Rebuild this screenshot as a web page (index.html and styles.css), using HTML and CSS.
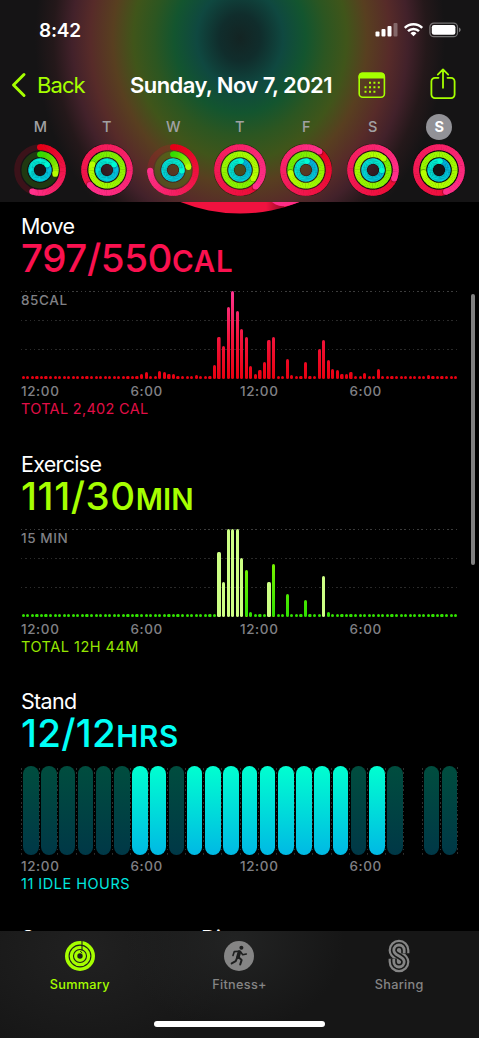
FILE: index.html
```
<!DOCTYPE html>
<html lang="en">
<head>
    <meta charset="UTF-8">
    <meta name="viewport" content="width=device-width, initial-scale=1.0">
    <title>Activity</title>
    <link rel="stylesheet" href="styles.css">
</head>
<body>
    <div class="phone">
        <!-- Header -->
        <header class="header">
            <div class="status-bar">
                <span class="time">8:42</span>
                <svg class="status-icons" width="86" height="16" viewBox="0 0 86 16">
                    <g fill="#fff">
                        <rect x="0.5" y="9.5" width="4" height="5" rx="1"/>
                        <rect x="6.5" y="7" width="4" height="7.5" rx="1"/>
                        <rect x="12.5" y="4" width="4" height="10.5" rx="1"/>
                        <rect x="18.5" y="1" width="4" height="13.5" rx="1" opacity="0.3"/>
                        <path d="M38.5 14.3l-3-3a4.3 4.3 0 0 1 6 0z"/>
                    </g>
                    <g fill="none" stroke="#fff" stroke-width="2.5">
                        <path d="M33 9.2a7.8 7.8 0 0 1 11 0"/>
                        <path d="M29.8 5.9a12.4 12.4 0 0 1 17.4 0"/>
                    </g>
                    <rect x="54.9" y="1.1" width="27.6" height="13.6" rx="4" fill="none" stroke="#fff" stroke-opacity="0.4" stroke-width="1.2"/>
                    <rect x="56.8" y="3" width="23.6" height="9.8" rx="2.2" fill="#fff"/>
                    <path d="M84 5.5c2.2.8 2.2 3.8 0 4.6z" fill="#fff" opacity="0.45"/>
                </svg>
            </div>

            <nav class="nav">
                <a class="back" href="#">
                    <svg width="16" height="26" viewBox="0 0 16 26"><path d="M13 2.5L2.5 13 13 23.5" fill="none" stroke="currentColor" stroke-width="3" stroke-linecap="round" stroke-linejoin="round"/></svg>
                    <span>Back</span>
                </a>
                <h1>Sunday, Nov 7, 2021</h1>
                <svg class="calendar" width="28" height="27" viewBox="0 0 28 27">
                    <rect x="1.2" y="1.2" width="25.2" height="24" rx="3.5" fill="none" stroke="currentColor" stroke-width="1.6"/>
                    <path d="M.5 6.6V4.5a4 4 0 0 1 4-4H23a4 4 0 0 1 4 4v2.1z" fill="currentColor"/>
                    <path d="M11 10.7h2m2.4 0h2m2.4 0h2M6.5 15.2h2m2.5 0h2m2.4 0h2m2.4 0h2M6.5 19.7h2m2.5 0h2m2.4 0h2" stroke="currentColor" stroke-width="2"/>
                </svg>
                <svg class="share" width="26" height="32" viewBox="0 0 26 32">
                    <path d="M8.5 9.8H5a3.6 3.6 0 0 0-3.6 3.6v13.2A3.6 3.6 0 0 0 5 30.2h16a3.6 3.6 0 0 0 3.6-3.6V13.4A3.6 3.6 0 0 0 21 9.8h-3.5M13 19.8V1.8M7.8 6.6L13 1.4l5.2 5.2" fill="none" stroke="currentColor" stroke-width="1.8" stroke-linecap="round" stroke-linejoin="round"/>
                </svg>
            </nav>

            <div class="week" id="week"></div>
        </header>

        <!-- Day details -->
        <main class="content">
            <svg class="big-ring" width="479" height="16" viewBox="0 202 479 16">
                <defs>
                    <linearGradient id="capShade">
                        <stop offset="0" stop-color="#000" stop-opacity="0"/>
                        <stop offset="1" stop-color="#000" stop-opacity="0.4"/>
                    </linearGradient>
                    <clipPath id="ringClip"><circle cx="240" cy="53.5" r="160"/></clipPath>
                </defs>
                <circle cx="240" cy="53.5" r="160" fill="#f0123f"/>
                <rect x="266" y="200" width="18" height="14" fill="url(#capShade)" clip-path="url(#ringClip)"/>
                <path d="M284 187.6A141 141 0 0 0 350 141" fill="none" stroke="#ff2d87" stroke-width="37.5" stroke-linecap="round"/>
            </svg>

            <section class="metric move">
                <h2>Move</h2>
                <p class="value">797/550<small>CAL</small></p>
                <div class="chart">
                    <span class="scale">85CAL</span>
                    <div class="bars" id="moveBars"></div>
                </div>
                <div class="axis"><span>12:00</span><span>6:00</span><span>12:00</span><span>6:00</span></div>
                <p class="total">TOTAL 2,402 CAL</p>
            </section>

            <section class="metric exercise">
                <h2>Exercise</h2>
                <p class="value">111/30<small>MIN</small></p>
                <div class="chart">
                    <span class="scale">15 MIN</span>
                    <div class="bars" id="exerciseBars"></div>
                </div>
                <div class="axis"><span>12:00</span><span>6:00</span><span>12:00</span><span>6:00</span></div>
                <p class="total">TOTAL 12H 44M</p>
            </section>

            <section class="metric stand">
                <h2>Stand</h2>
                <p class="value">12/12<small>HRS</small></p>
                <div class="hours" id="standHours"></div>
                <div class="axis"><span>12:00</span><span>6:00</span><span>12:00</span><span>6:00</span></div>
                <p class="total">11 IDLE HOURS</p>
            </section>

            <section class="more">
                <h2>Steps</h2>
                <h2>Distance</h2>
            </section>
        </main>

        <div class="scrollbar"></div>

        <!-- Tab bar -->
        <footer class="tab-bar">
            <div class="tabs">
                <a class="tab active" href="#">
                    <svg width="34" height="34" viewBox="0 0 34 34">
                        <circle cx="17" cy="17" r="15" fill="currentColor"/>
                        <g fill="none" stroke="#1c1e1b" stroke-width="1.1">
                            <circle cx="17" cy="17" r="10.9"/>
                            <circle cx="17" cy="17" r="6.5"/>
                            <path d="M19 2v9.5"/>
                        </g>
                        <circle cx="17" cy="17" r="2.7" fill="#1c1e1b"/>
                        <path d="M17.2 12.2l2 1.8" stroke="#1c1e1b" stroke-width="1"/>
                    </svg>
                    <span>Summary</span>
                </a>
                <a class="tab" href="#">
                    <svg width="34" height="34" viewBox="0 0 34 34">
                        <circle cx="17" cy="17" r="15" fill="currentColor"/>
                        <circle cx="19.4" cy="8.8" r="2" fill="#1e1f1f"/>
                        <g fill="none" stroke="#1e1f1f" stroke-linecap="round" stroke-linejoin="round">
                            <path d="M17.4 13l-1.5 5.2" stroke-width="3.6"/>
                            <path d="M17 12.2l-4.7.4-1.3 3.9M18.5 12.8l2.2 3 3.6-.8" stroke-width="1.6"/>
                            <path d="M16.6 18.3l3 2.8-1.4 4.4M15.2 18.6l-1.5 3.6-4 2.2" stroke-width="2"/>
                        </g>
                    </svg>
                    <span>Fitness+</span>
                </a>
                <a class="tab" href="#">
                    <svg width="24" height="34" viewBox="0 0 24 34">
                        <g fill="none">
                            <path d="M17.2 14.2V11.2a5.2 5.2 0 0 0-10.4 0c0 6 10.4 5.6 10.4 11.6a5.2 5.2 0 0 1-10.4 0V19.8" stroke="currentColor" stroke-width="10.4"/>
                            <path d="M17.2 14.4V11.2a5.2 5.2 0 0 0-10.4 0c0 6 10.4 5.6 10.4 11.6a5.2 5.2 0 0 1-10.4 0V19.6" stroke="#171817" stroke-width="6"/>
                            <path d="M17.2 14.2V11.2a5.2 5.2 0 0 0-10.4 0c0 6 10.4 5.6 10.4 11.6a5.2 5.2 0 0 1-10.4 0V19.8" stroke="currentColor" stroke-width="2.8"/>
                        </g>
                    </svg>
                    <span>Sharing</span>
                </a>
            </div>
            <div class="home-indicator"></div>
        </footer>
    </div>

    <script>
        // Ring values are laps: 1 is a closed ring
        const week = [
            { day: 'M', move: 0.555, exercise: 0.29, stand: 1.15 },
            { day: 'T', move: 1.635, exercise: 1.81, stand: 1.15 },
            { day: 'W', move: 0.745, exercise: 0.22, stand: 1.27 },
            { day: 'T', move: 1.38, exercise: 2.34, stand: 1.02 },
            { day: 'F', move: 1.10, exercise: 1.72, stand: 1.02 },
            { day: 'S', move: 1.31, exercise: 2.12, stand: 1.26 },
            { day: 'S', move: 1.45, exercise: 3.72, stand: 1.02, selected: true }
        ];

        const rings = [
            { key: 'move', r: 22.8, width: 6, from: [229, 0, 22], to: [255, 48, 140] },
            { key: 'exercise', r: 15.7, width: 5.7, from: [50, 220, 0], to: [182, 255, 0] },
            { key: 'stand', r: 8.9, width: 5.5, from: [0, 176, 228], to: [0, 250, 210] }
        ];

        function mix(a, b, t) {
            return `rgb(${a.map((v, i) => Math.round(v + (b[i] - v) * t)).join(',')})`;
        }

        function point(r, lap) {
            const a = lap * Math.PI * 2;
            return [(26 + r * Math.sin(a)).toFixed(2), (26 - r * Math.cos(a)).toFixed(2)];
        }

        // Each ring is made of short arcs so the colour can follow the curve
        function drawRing(ring, value) {
            const start = Math.max(0, value - 1);
            const steps = 60;
            let svg = `<circle cx="26" cy="26" r="${ring.r}" fill="none" stroke="${mix(ring.from, ring.to, 0.2)}" stroke-opacity="0.18" stroke-width="${ring.width}"/>`;
            if (value <= 1) {
                const [x, y] = point(ring.r, 0);
                svg += `<circle cx="${x}" cy="${y}" r="${ring.width / 2}" fill="${mix(ring.from, ring.to, 0)}"/>`;
            } else {
                svg += `<circle cx="26" cy="26" r="${ring.r}" fill="none" stroke="#000" stroke-opacity="0.35" stroke-width="${ring.width + 1.4}"/>`;
            }
            for (let i = 0; i < steps; i++) {
                const a = start + (value - start) * i / steps;
                const b = start + (value - start) * (i + 1) / steps + 0.003;
                const [x1, y1] = point(ring.r, a);
                const [x2, y2] = point(ring.r, b);
                svg += `<path d="M${x1} ${y1}A${ring.r} ${ring.r} 0 0 1 ${x2} ${y2}" fill="none" stroke="${mix(ring.from, ring.to, a / value)}" stroke-width="${ring.width}"/>`;
            }
            const [x, y] = point(ring.r, value);
            if (value > 1) {
                const [sx, sy] = point(ring.r, value + 0.008);
                svg += `<circle cx="${sx}" cy="${sy}" r="${ring.width / 2}" fill="#000" opacity="0.25"/>`;
            }
            svg += `<circle cx="${x}" cy="${y}" r="${ring.width / 2}" fill="${mix(ring.from, ring.to, 1)}"/>`;
            return svg;
        }

        document.getElementById('week').innerHTML = week.map(d => `
            <div class="day${d.selected ? ' selected' : ''}">
                <span class="day-name">${d.day}</span>
                <svg width="52" height="52" viewBox="0 0 52 52">${rings.map(r => drawRing(r, d[r.key])).join('')}</svg>
            </div>`).join('');

        // Quarter-hour bars, heights in px. Slots not listed are empty.
        const move = {
            26: 5.3, 27: 7, 30: 8, 31: 7.5, 32: 5.3, 33: 5, 38: 4, 42: 14, 43: 42.5, 44: 33.5,
            45: 72.5, 46: 88, 47: 68, 48: 50, 49: 42.5, 50: 13.5, 51: 5, 52: 9, 53: 17, 54: 39.5,
            55: 42.5, 58: 20.5, 59: 4, 62: 17, 65: 30.5, 66: 39, 67: 19.5, 68: 10.5, 69: 9.5,
            70: 5.5, 71: 5.5, 72: 7, 75: 6, 77: 3.5, 78: 10, 89: 3.7
        };
        const exercise = {
            43: 64.5, 44: 35, 45: 88, 46: 88, 47: 88, 48: 58.5, 49: 46.5, 50: 5,
            54: 34.5, 55: 52.5, 58: 23, 62: 17, 66: 40.5, 67: 5
        };
        const workout = [43, 44, 45, 46, 47, 48, 54, 66];

        function renderBars(id, data, highlighted) {
            let html = '';
            for (let i = 0; i < 96; i++) {
                const cls = highlighted.includes(i) ? 'bar workout' : 'bar';
                html += `<i class="${cls}" style="height: ${data[i] || 3}px"></i>`;
            }
            document.getElementById(id).innerHTML = html;
        }

        renderBars('moveBars', move, []);
        renderBars('exerciseBars', exercise, workout);

        // s = stood, i = idle, - = no data
        const hourClass = { s: 'stood', i: 'idle', '-': 'none' };
        document.getElementById('standHours').innerHTML = [...'iiiiiississsssssssisi-ii']
            .map(h => `<div class="hour"><i class="${hourClass[h]}"></i></div>`).join('');
    </script>
</body>
</html>
```
FILE: styles.css
```
* {
    margin: 0;
    padding: 0;
    box-sizing: border-box;
    font-family: Inter, 'Liberation Sans', sans-serif;
}

body {
    background: #fff;
}

.phone {
    position: relative;
    display: flex;
    flex-direction: column;
    width: 479px;
    height: 1038px;
    background: #000;
    color: #fff;
    overflow: hidden;
}

a {
    color: inherit;
    text-decoration: none;
}

/* Header */
.header {
    flex: none;
    height: 202px;
    background: radial-gradient(ellipse 205px 235px at 240px 38px,
        #132423 0%, #102d2c 10%, #0f4840 21%, #13552f 32%, #2c5621 42%,
        #40551a 52%, #583f20 62%, #572b29 73%, #42212a 82%, #24181a 91%, #151415 100%);
}

.status-bar {
    display: flex;
    justify-content: space-between;
    align-items: center;
    height: 60px;
    padding: 0 18px 0 39px;
}

.time {
    font-size: 19px;
    font-weight: 600;
    letter-spacing: -0.2px;
}

.nav {
    display: flex;
    align-items: center;
    height: 50px;
    padding: 0 23px 0 11px;
    color: #a6ff00;
}

.back {
    display: flex;
    align-items: center;
    gap: 10px;
    width: 119px;
    font-size: 22px;
    letter-spacing: -0.9px;
}

.nav h1 {
    width: 228px;
    color: #fff;
    font-size: 22px;
    font-weight: 600;
    letter-spacing: -0.57px;
    white-space: nowrap;
}

.share {
    margin-left: auto;
    position: relative;
    top: -1px;
}

.week {
    display: grid;
    grid-template-columns: repeat(7, 66.5px);
    padding: 4px 0 0 7px;
}

.day {
    display: flex;
    flex-direction: column;
    align-items: center;
    gap: 4px;
}

.day-name {
    width: 26px;
    height: 26px;
    border-radius: 50%;
    color: #a1a1a3;
    font-size: 14.5px;
    font-weight: 500;
    line-height: 26px;
    text-align: center;
}

.selected .day-name {
    background: #929297;
    color: #fff;
    font-weight: 700;
}

/* Metrics */
.content {
    flex: none;
    display: flow-root;
    height: 730px;
}

.big-ring {
    display: block;
    margin-bottom: -5px;
}

.metric {
    height: 237.6px;
    padding-left: 21px;
}

h2 {
    font-size: 21.5px;
    font-weight: 400;
    line-height: 26px;
    letter-spacing: -0.7px;
}

.value {
    font-size: 38.5px;
    font-weight: 500;
    line-height: 39px;
    letter-spacing: -0.4px;
}

.value small {
    font-size: 29.5px;
    font-weight: 600;
    letter-spacing: 0.8px;
}

.move .value,
.move .total {
    color: #fa114f;
}

.exercise .value,
.exercise .total {
    color: #a6ff00;
}

.exercise .value {
    letter-spacing: 0.6px;
}

.exercise small {
    letter-spacing: 0;
}

.stand .value,
.stand .total {
    color: #00fff6;
}

.stand .value {
    letter-spacing: 0.3px;
}

.chart {
    position: relative;
    width: 437px;
    height: 88px;
    margin-top: 10px;
    background:
        repeating-linear-gradient(90deg, #3c3c3c 0 1.5px, transparent 1.5px 4.26px) 0 0 / 100% 1px no-repeat,
        repeating-linear-gradient(90deg, #2a2a2a 0 1.5px, transparent 1.5px 4.26px) 0 29px / 100% 1px no-repeat,
        repeating-linear-gradient(90deg, #2a2a2a 0 1.5px, transparent 1.5px 4.26px) 0 58px / 100% 1px no-repeat;
}

.scale {
    position: absolute;
    top: 1px;
    left: 0;
    color: #808085;
    font-size: 13.5px;
    font-weight: 500;
    line-height: 17px;
    letter-spacing: 0.6px;
}

.bars {
    display: grid;
    grid-template-columns: repeat(96, 1fr);
    align-items: end;
    justify-items: center;
    height: 100%;
}

/* Gradient is tied to the chart height, not the bar */
.bar {
    width: 3.2px;
    border-radius: 1.5px;
    background: linear-gradient(0deg, #e8000f, #f2163f 50%, #ff3592) bottom / 100% 88px;
}

.exercise .bar {
    background-image: linear-gradient(0deg, #2fe000, #a6ff00);
}

.exercise .workout {
    background: #cdff85;
}

.hours {
    display: grid;
    grid-template-columns: repeat(24, 1fr);
    width: 437px;
    height: 88px;
    margin-top: 10px;
    background: repeating-linear-gradient(0deg, #303030 0 1.5px, transparent 1.5px 4.26px) right / 1px 100% no-repeat;
}

.hour {
    padding: 0 0 0 2px;
    background: repeating-linear-gradient(0deg, #303030 0 1.5px, transparent 1.5px 4.26px) left / 1px 100% no-repeat;
}

.hour i {
    display: block;
    width: 15.6px;
    height: 88.5px;
    border-radius: 8px;
}

.stood {
    background: linear-gradient(#00ffd0, #00b9e4);
}

.idle {
    background: linear-gradient(#004d3e, #003847);
}

.axis {
    display: grid;
    grid-template-columns: repeat(4, 109.5px);
    margin-top: 3px;
    color: #808085;
    font-size: 13.5px;
    font-weight: 500;
    line-height: 18px;
    letter-spacing: 0.6px;
}

.total {
    font-size: 14.5px;
    line-height: 17px;
    letter-spacing: 0.5px;
    opacity: 0.9;
}

.move .total {
    letter-spacing: 0.3px;
}

.more {
    display: grid;
    grid-template-columns: 180px 1fr;
    margin-top: -0.5px;
    padding-left: 21px;
}

.scrollbar {
    position: absolute;
    top: 294px;
    right: 4px;
    width: 4px;
    height: 271px;
    border-radius: 2px;
    background: #808080;
}

/* Tab bar */
.tab-bar {
    position: absolute;
    left: 0;
    bottom: 0;
    width: 479px;
    height: 107px;
    background:
        radial-gradient(ellipse 110px 90px at 235px 10px, #222323, transparent),
        radial-gradient(ellipse 150px 110px at 85px 20px, #212121, transparent),
        #161616;
}

.tabs {
    display: grid;
    grid-template-columns: repeat(3, 1fr);
    height: 89px;
    padding-top: 8px;
}

.tab {
    display: flex;
    flex-direction: column;
    align-items: center;
    gap: 3px;
    color: #858585;
    font-size: 12.7px;
    font-weight: 500;
    line-height: 18px;
    letter-spacing: 0.3px;
}

.tab.active {
    color: #a6ff00;
}

.home-indicator {
    width: 171px;
    height: 6px;
    margin: 1px auto 0;
    border-radius: 3px;
    background: #fff;
}
```
